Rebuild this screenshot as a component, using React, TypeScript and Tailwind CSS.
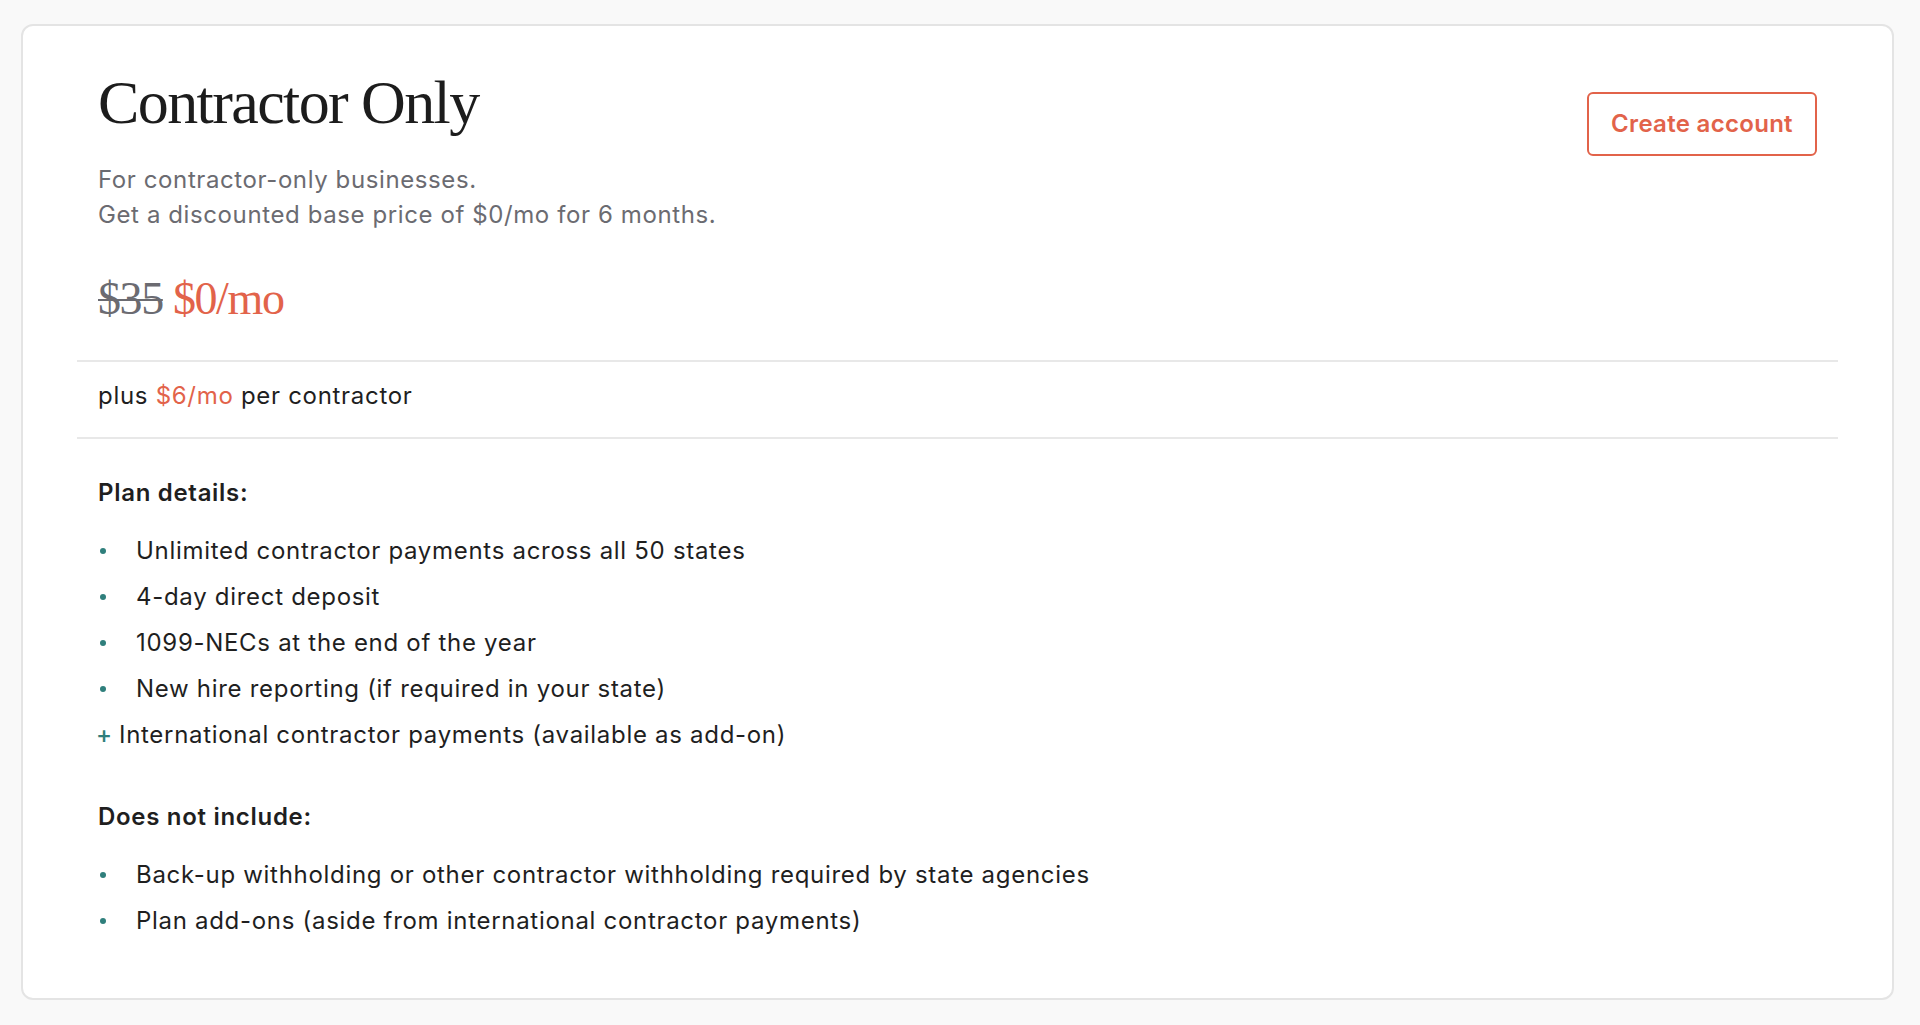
export default function App() {
  const details = [
    "Unlimited contractor payments across all 50 states",
    "4-day direct deposit",
    "1099-NECs at the end of the year",
    "New hire reporting (if required in your state)"
  ];
  const excluded = [
    "Back-up withholding or other contractor withholding required by state agencies",
    "Plan add-ons (aside from international contractor payments)"
  ];

  return (
    <div className="min-h-[1025px] w-full bg-[#f9f9f9] pl-[21px] pr-[26px] pt-[24px] pb-[27px] font-['Inter',sans-serif] text-[24px] tracking-[0.7px] text-[#1f1f1f]">
      <div className="rounded-[12px] border-2 border-[#e4e4e4] bg-white px-[54px] pt-[41px] pb-[54px]">
        {/* Header */}
        <div className="flex items-start justify-between px-[21px]">
          <div>
            <h1 className="font-['Liberation_Serif',serif] text-[62px] leading-[70px] tracking-[-1.6px] text-[#1c1c1c]">
              Contractor Only
            </h1>
            <p className="mt-[25px] leading-[35px] tracking-[0.6px] text-[#6b6b71]">
              For contractor-only businesses.
              <br />
              Get a discounted base price of $0/mo for 6 months.
            </p>
            <p className="mt-[41px] font-['Liberation_Serif',serif] text-[46px] leading-[52px] tracking-[-1.4px]">
              <span className="text-[#6b6b71] line-through decoration-2">$35</span>{" "}
              <span className="text-[#e2634a]">$0/mo</span>
            </p>
          </div>
          <a
            href="#"
            className="mt-[25px] flex h-[64px] w-[230px] items-center justify-center rounded-[6px] border-2 border-[#e2634a] font-semibold tracking-[0.3px] text-[#e2634a]"
          >
            Create account
          </a>
        </div>

        {/* Per contractor */}
        <div className="mt-[35px] border-y-2 border-[#e8e8e8] px-[21px] pt-[16px] pb-[24px] leading-[35px]">
          plus <span className="text-[#e2634a]">$6/mo</span> per contractor
        </div>

        {/* Details */}
        <div className="mt-[36px] px-[21px]">
          <h3 className="font-semibold leading-[35px]">Plan details:</h3>
          <ul className="mt-[18px]">
            {details.map((item, i) => (
              <li key={i} className="flex items-center leading-[46px]">
                <span className="ml-[2px] mr-[30px] h-[6px] w-[6px] flex-none rounded-full bg-[#2f7f7c]" />
                {item}
              </li>
            ))}
            <li className="flex items-center leading-[46px]">
              <span className="-ml-[2px] mr-[7px] w-[16px] flex-none text-center text-[24px] font-medium leading-none text-[#2f7f7c]">+</span>
              International contractor payments (available as add-on)
            </li>
          </ul>

          <h3 className="mt-[41px] font-semibold leading-[35px]">Does not include:</h3>
          <ul className="mt-[18px]">
            {excluded.map((item, i) => (
              <li key={i} className="flex items-center leading-[46px]">
                <span className="ml-[2px] mr-[30px] h-[6px] w-[6px] flex-none rounded-full bg-[#2f7f7c]" />
                {item}
              </li>
            ))}
          </ul>
        </div>
      </div>
    </div>
  );
}
